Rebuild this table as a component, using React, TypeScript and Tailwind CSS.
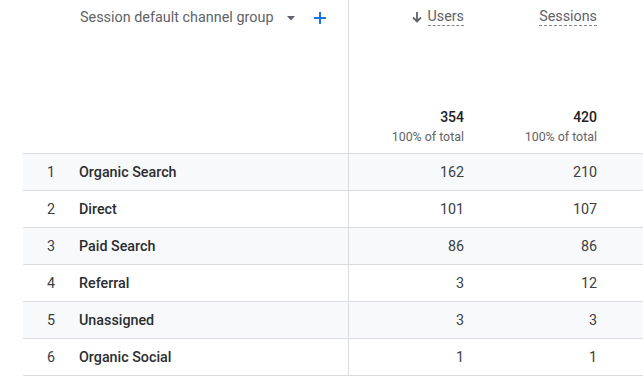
const rows = [
  { rank: 1, name: "Organic Search", users: 162, sessions: 210 },
  { rank: 2, name: "Direct", users: 101, sessions: 107 },
  { rank: 3, name: "Paid Search", users: 86, sessions: 86 },
  { rank: 4, name: "Referral", users: 3, sessions: 12 },
  { rank: 5, name: "Unassigned", users: 3, sessions: 3 },
  { rank: 6, name: "Organic Social", users: 1, sessions: 1 },
];

function MetricHead({ label, sorted }: { label: string; sorted?: boolean }) {
  return (
    <div className="flex items-center gap-[5px] text-[14.3px] text-[#5f6368]">
      {sorted && (
        <svg width="12" height="12" viewBox="0 0 12 12" className="text-[#5f6368]">
          <path d="M6 1v9M2 6.5l4 4 4-4" fill="none" stroke="currentColor" strokeWidth="1.8" />
        </svg>
      )}
      <span className="border-b border-dashed border-[#80868b] pb-[1px] leading-[16px]">{label}</span>
    </div>
  );
}

function Total({ value }: { value: string }) {
  return (
    <div className="flex flex-col items-end">
      <div className="text-[14px] font-medium text-[#202124] leading-[16px]">{value}</div>
      <div className="mt-[5px] text-[12.4px] text-[#5f6368] leading-[14px]">100% of total</div>
    </div>
  );
}

export default function App() {
  return (
    <div
      className="w-[643px] h-[387px] bg-white overflow-hidden"
      style={{ fontFamily: "Roboto, 'Liberation Sans', sans-serif" }}
    >
      <div className="flex h-[153px]">
        <div className="w-[349px] shrink-0 border-r border-[#dadce0] pl-[80px] pt-[9px]">
          <div className="flex items-center h-[18px] text-[14.4px] text-[#5f6368]">
            <span>Session default channel group</span>
            <svg width="8" height="5" viewBox="0 0 8 5" className="ml-[14px]">
              <path d="M0 0h8L4 4.5z" fill="#5f6368" />
            </svg>
            <svg width="14" height="14" viewBox="0 0 14 14" className="ml-[18px]">
              <path d="M7 1v12M1 7h12" fill="none" stroke="#1a73e8" strokeWidth="2" />
            </svg>
          </div>
        </div>
        <div className="w-[115px] shrink-0 flex flex-col items-end justify-between pt-[8px] pb-[9px]">
          <MetricHead label="Users" sorted />
          <Total value="354" />
        </div>
        <div className="w-[133px] shrink-0 flex flex-col items-end justify-between pt-[8px] pb-[9px]">
          <MetricHead label="Sessions" />
          <Total value="420" />
        </div>
      </div>
      <div className="ml-[23px] border-t border-[#dadce0]">
        {rows.map((r, i) => (
          <div
            key={r.rank}
            className={`flex h-[37px] border-b border-[#dadce0] text-[14.3px] ${
              i % 2 === 0 ? "bg-[#f8f9fa]" : "bg-white"
            }`}
          >
            <div className="w-[326px] shrink-0 flex items-center pt-[2px] border-r border-[#dadce0]">
              <span className="w-[56px] text-center text-[#3c4043]">{r.rank}</span>
              <span className="font-medium text-[#2b2e31]">{r.name}</span>
            </div>
            <div className="w-[115px] shrink-0 flex items-center justify-end pt-[2px] text-[#3c4043]">{r.users}</div>
            <div className="w-[133px] shrink-0 flex items-center justify-end pt-[2px] text-[#3c4043]">{r.sessions}</div>
          </div>
        ))}
      </div>
    </div>
  );
}
